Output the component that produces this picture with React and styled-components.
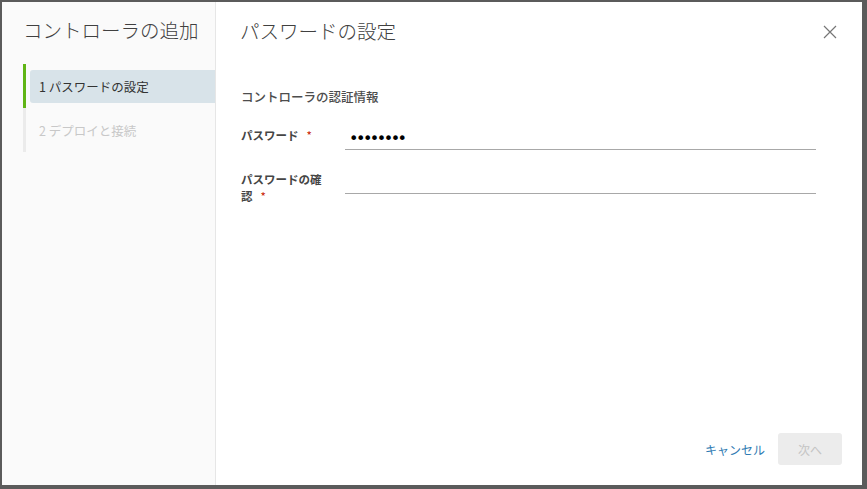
import React from 'react';
import styled, { createGlobalStyle } from 'styled-components';

const GlobalStyle = createGlobalStyle`
  html, body {
    margin: 0;
    padding: 0;
    background: #5b5b5b;
  }
  body {
    font-family: "Noto Sans CJK JP", "Noto Sans", sans-serif;
    color: #333;
  }
`;

const Backdrop = styled.div`
  width: 867px;
  height: 489px;
  padding: 2px 0 0 2px;
  box-sizing: border-box;
  background: #5b5b5b;
`;

const Modal = styled.div`
  display: flex;
  width: 860px;
  height: 483px;
  background: #fff;
`;

const Sidebar = styled.div`
  width: 214px;
  flex-shrink: 0;
  background: #fafafa;
  border-right: 1px solid #e6e6e6;
  padding: 13px 0 0 21px;
  box-sizing: border-box;
`;

const SideTitle = styled.h2`
  margin: 0 0 19px;
  font-size: 19.5px;
  font-weight: 300;
  line-height: 30px;
  color: #404040;
  white-space: nowrap;
`;

const StepList = styled.div`
  display: flex;
  flex-direction: column;
`;

const Step = styled.div`
  display: flex;
  height: 44px;
`;

const StepBar = styled.div`
  width: 3px;
  flex-shrink: 0;
  background: ${p => (p.$active ? '#60b515' : '#ebebeb')};
`;

const StepBody = styled.div`
  flex: 1;
  padding: 6px 0 5px 4px;
  display: flex;
`;

const StepLabel = styled.div`
  flex: 1;
  display: flex;
  align-items: center;
  padding-left: 9px;
  font-size: 12.5px;
  color: ${p => (p.$active ? '#333' : '#c8c8c8')};
  background: ${p => (p.$active ? '#d8e3e9' : 'transparent')};
  border-radius: 3px 0 0 3px;
`;

const Main = styled.div`
  flex: 1;
  display: flex;
  flex-direction: column;
  padding: 13px 20px 20px 24px;
  box-sizing: border-box;
`;

const Header = styled.div`
  display: flex;
  align-items: center;
  justify-content: space-between;
  height: 30px;
`;

const Title = styled.h3`
  margin: 0;
  font-size: 19.5px;
  font-weight: 300;
  color: #404040;
`;

const CloseButton = styled.button`
  border: 0;
  background: none;
  padding: 0;
  width: 20px;
  height: 20px;
  margin-right: 2px;
  margin-top: 3px;
  display: flex;
  align-items: center;
  justify-content: center;
  cursor: pointer;
`;

const Content = styled.div`
  flex: 1;
  padding-top: 42px;
  padding-left: 1px;
`;

const SectionTitle = styled.div`
  font-size: 12.5px;
  font-weight: 500;
  color: #4d4d4d;
  line-height: 20px;
  margin-bottom: 20px;
`;

const Row = styled.div`
  display: flex;
  align-items: flex-start;
  margin-bottom: ${p => p.$gap || 0}px;
`;

const Label = styled.label`
  width: 88px;
  flex-shrink: 0;
  margin-right: 16px;
  font-size: 11.5px;
  font-weight: 700;
  color: #454545;
  line-height: 17px;
`;

const Required = styled.span`
  color: #c92100;
  margin-left: 8px;
  font-weight: 400;
`;

const Input = styled.input`
  width: 471px;
  height: 23px;
  border: 0;
  border-bottom: 1px solid #a8a8a8;
  background: transparent;
  padding: 0 4px;
  box-sizing: border-box;
  font-family: "DejaVu Sans", sans-serif;
  font-size: 16px;
  letter-spacing: -2.5px;
  color: #000;
  outline: none;
`;

const Footer = styled.div`
  display: flex;
  justify-content: flex-end;
  align-items: center;
  gap: 1px;
`;

const LinkButton = styled.button`
  border: 0;
  background: none;
  padding: 0 12px;
  height: 32px;
  font-family: inherit;
  font-size: 12px;
  color: #2f7bb3;
  cursor: pointer;
`;

const PrimaryButton = styled.button`
  width: 64px;
  height: 32px;
  border: 0;
  border-radius: 3px;
  background: #ececec;
  color: #c4c4c4;
  font-family: inherit;
  font-size: 12px;
`;

export default function App() {
  return (
    <Backdrop>
      <GlobalStyle />
      <Modal>
        <Sidebar>
          <SideTitle>コントローラの追加</SideTitle>
          <StepList>
            <Step>
              <StepBar $active />
              <StepBody>
                <StepLabel $active>1 パスワードの設定</StepLabel>
              </StepBody>
            </Step>
            <Step>
              <StepBar />
              <StepBody>
                <StepLabel>2 デプロイと接続</StepLabel>
              </StepBody>
            </Step>
          </StepList>
        </Sidebar>
        <Main>
          <Header>
            <Title>パスワードの設定</Title>
            <CloseButton aria-label="閉じる">
              <svg width="14" height="14" viewBox="0 0 14 14">
                <path d="M1 1 L13 13 M13 1 L1 13" stroke="#767676" strokeWidth="1.2" fill="none" />
              </svg>
            </CloseButton>
          </Header>
          <Content>
            <SectionTitle>コントローラの認証情報</SectionTitle>
            <Row $gap={21}>
              <Label>パスワード<Required>*</Required></Label>
              <Input type="password" defaultValue="password" readOnly />
            </Row>
            <Row>
              <Label>パスワードの確認<Required>*</Required></Label>
              <Input type="password" readOnly />
            </Row>
          </Content>
          <Footer>
            <LinkButton>キャンセル</LinkButton>
            <PrimaryButton disabled>次へ</PrimaryButton>
          </Footer>
        </Main>
      </Modal>
    </Backdrop>
  );
}
